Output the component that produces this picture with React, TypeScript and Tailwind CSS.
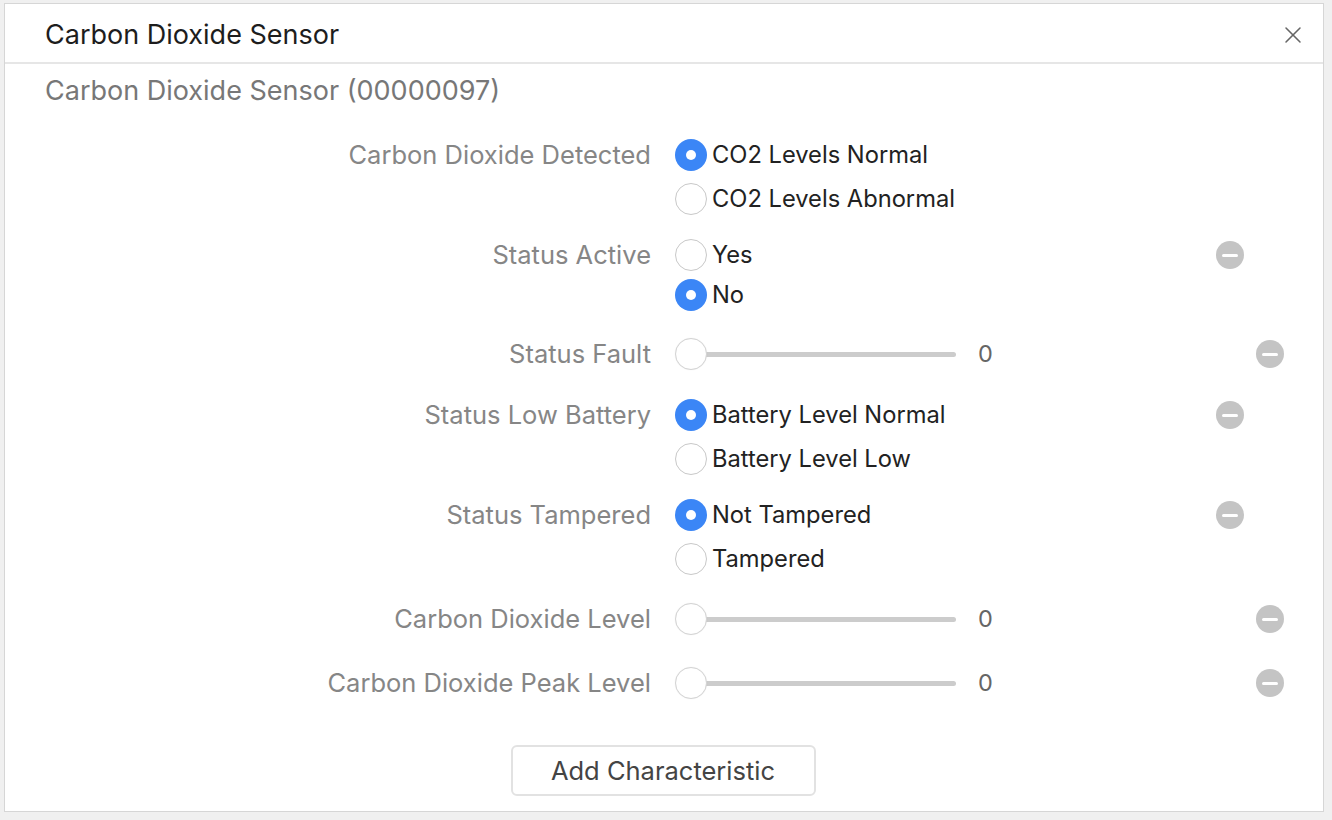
import { X } from "lucide-react";

type RadioRow = {
  kind: "radio";
  label: string;
  options: string[];
  selected: number;
  removable: boolean;
  itemClass: string;
  rowClass: string;
};

type SliderRow = {
  kind: "slider";
  label: string;
  value: number;
  rowClass: string;
};

type Row = RadioRow | SliderRow;

const rows: Row[] = [
  {
    kind: "radio",
    label: "Carbon Dioxide Detected",
    options: ["CO2 Levels Normal", "CO2 Levels Abnormal"],
    selected: 0,
    removable: false,
    itemClass: "h-[44px]",
    rowClass: "mt-[14px]",
  },
  {
    kind: "radio",
    label: "Status Active",
    options: ["Yes", "No"],
    selected: 1,
    removable: true,
    itemClass: "h-[40px]",
    rowClass: "mt-[14px]",
  },
  { kind: "slider", label: "Status Fault", value: 0, rowClass: "mt-[19px]" },
  {
    kind: "radio",
    label: "Status Low Battery",
    options: ["Battery Level Normal", "Battery Level Low"],
    selected: 0,
    removable: true,
    itemClass: "h-[44px]",
    rowClass: "mt-[19px]",
  },
  {
    kind: "radio",
    label: "Status Tampered",
    options: ["Not Tampered", "Tampered"],
    selected: 0,
    removable: true,
    itemClass: "h-[44px]",
    rowClass: "mt-[12px]",
  },
  {
    kind: "slider",
    label: "Carbon Dioxide Level",
    value: 0,
    rowClass: "mt-[18px]",
  },
  {
    kind: "slider",
    label: "Carbon Dioxide Peak Level",
    value: 0,
    rowClass: "mt-[24px]",
  },
];

function RemoveButton() {
  return (
    <div className="w-[28px] h-[28px] rounded-full bg-[#c4c4c4] flex items-center justify-center">
      <div className="w-[16px] h-[3px] rounded-full bg-white" />
    </div>
  );
}

function Radio(props: { checked: boolean }) {
  if (props.checked) {
    return (
      <div className="w-[32px] h-[32px] rounded-full bg-[#3b86f6] flex items-center justify-center shrink-0">
        <div className="w-[10px] h-[10px] rounded-full bg-white" />
      </div>
    );
  }
  return (
    <div className="w-[32px] h-[32px] rounded-full bg-white border border-[#c8c8c8] shrink-0" />
  );
}

function Label(props: { text: string }) {
  return (
    <div className="w-[670px] pr-[24px] text-right text-[25.5px] text-[#868686] leading-none shrink-0">
      {props.text}
    </div>
  );
}

function RadioGroup(props: { row: RadioRow }) {
  const row = props.row;
  return (
    <div className={"flex " + row.rowClass}>
      <div className="flex items-start">
        <div className={"flex items-center " + row.itemClass}>
          <Label text={row.label} />
        </div>
      </div>
      <div className="w-[541px] flex flex-col">
        {row.options.map((opt, i) => (
          <div key={opt} className={"flex items-center gap-[5px] " + row.itemClass}>
            <Radio checked={i === row.selected} />
            <span className="text-[23.7px] text-[#222] leading-none">{opt}</span>
          </div>
        ))}
      </div>
      {row.removable && (
        <div className={"flex items-center " + row.itemClass}>
          <RemoveButton />
        </div>
      )}
    </div>
  );
}

function SliderControl(props: { row: SliderRow }) {
  const row = props.row;
  return (
    <div className={"flex items-center h-[40px] " + row.rowClass}>
      <Label text={row.label} />
      <div className="w-[581px] flex items-center">
        <div className="relative w-[286px] h-[32px] flex items-center">
          <div className="ml-[16px] w-[265px] h-[5px] rounded-full bg-[#cccccc]" />
          <div className="absolute left-0 top-0 w-[32px] h-[32px] rounded-full bg-white border border-[#d4d4d4] shadow-[0_0_1px_rgba(0,0,0,0.1)]" />
        </div>
        <span className="ml-[17px] text-[23.5px] text-[#666] leading-none">{row.value}</span>
      </div>
      <RemoveButton />
    </div>
  );
}

export default function App() {
  return (
    <div
      className="w-[1332px] h-[820px] bg-[#f0f0f0] pt-[3px] pl-[4px] overflow-hidden"
      style={{ fontFamily: "Inter, 'Liberation Sans', sans-serif" }}
    >
      <div className="w-[1320px] h-[809px] bg-white border border-[#d6d6d6] flex flex-col">
        <div className="h-[60px] flex items-center justify-between pt-[3px] pl-[40px] pr-[16px] border-b-2 border-[#e6e6e6]">
          <h1 className="text-[27px] text-[#1d1d1d] leading-none">Carbon Dioxide Sensor</h1>
          <X className="w-[28px] h-[28px] text-[#666]" strokeWidth={1.3} />
        </div>
        <div className="pl-[40px] pt-[13px] h-[55px]">
          <h2 className="text-[27px] text-[#777] leading-none">
            Carbon Dioxide Sensor (00000097)
          </h2>
        </div>
        {rows.map((row) =>
          row.kind === "radio" ? (
            <RadioGroup key={row.label} row={row} />
          ) : (
            <SliderControl key={row.label} row={row} />
          )
        )}
        <div className="flex justify-center mt-[42px] pr-[2px]">
          <button className="w-[305px] h-[51px] rounded-[6px] border-2 border-[#e2e2e2] bg-white text-[25.5px] text-[#444] leading-none">
            Add Characteristic
          </button>
        </div>
      </div>
    </div>
  );
}
